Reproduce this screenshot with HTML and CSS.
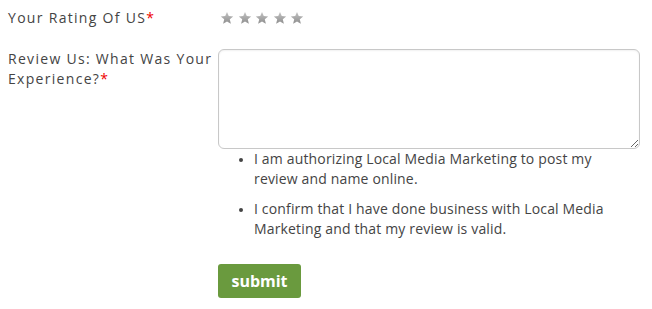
FILE: index.html
```html
<!DOCTYPE html>
<html>
<head>
<meta charset="utf-8">
<link rel="stylesheet" href="styles.css">
</head>
<body>
<form class="review-form">
  <div class="row rating-row">
    <label class="label required">Your Rating Of US</label>
    <div class="field">
      <div class="stars">
        <svg class="star" viewBox="0 0 24 24"><defs><linearGradient id="sg" x1="0" y1="0" x2="0" y2="1"><stop offset="0" stop-color="#c4c4c4"/><stop offset="1" stop-color="#8e8e8e"/></linearGradient></defs><path d="M12 1.5l3 7.2 7.6.6-5.8 5 1.8 7.6L12 17.8l-6.6 4.1 1.8-7.6-5.8-5 7.6-.6z"/></svg>
        <svg class="star" viewBox="0 0 24 24"><path d="M12 1.5l3 7.2 7.6.6-5.8 5 1.8 7.6L12 17.8l-6.6 4.1 1.8-7.6-5.8-5 7.6-.6z"/></svg>
        <svg class="star" viewBox="0 0 24 24"><path d="M12 1.5l3 7.2 7.6.6-5.8 5 1.8 7.6L12 17.8l-6.6 4.1 1.8-7.6-5.8-5 7.6-.6z"/></svg>
        <svg class="star" viewBox="0 0 24 24"><path d="M12 1.5l3 7.2 7.6.6-5.8 5 1.8 7.6L12 17.8l-6.6 4.1 1.8-7.6-5.8-5 7.6-.6z"/></svg>
        <svg class="star" viewBox="0 0 24 24"><path d="M12 1.5l3 7.2 7.6.6-5.8 5 1.8 7.6L12 17.8l-6.6 4.1 1.8-7.6-5.8-5 7.6-.6z"/></svg>
      </div>
    </div>
  </div>
  <div class="row review-row">
    <label class="label required">Review Us: What Was Your Experience?</label>
    <div class="field">
      <textarea class="textarea"></textarea>
      <ul class="terms">
        <li>I am authorizing Local Media Marketing to post my review and name online.</li>
        <li>I confirm that I have done business with Local Media Marketing and that my review is valid.</li>
      </ul>
      <button type="button" class="submit">submit</button>
    </div>
  </div>
</form>
</body>
</html>
```
FILE: styles.css
```css
html, body {
  margin: 0;
  padding: 0;
  background: #fff;
}
body {
  padding: 8px;
  font-family: "Open Sans", "Liberation Sans", sans-serif;
  font-size: 14px;
  line-height: 20px;
  color: #444;
}
.review-form {
  display: flex;
  flex-direction: column;
}
.row {
  display: grid;
  grid-template-columns: 210px 422px;
}
.rating-row {
  height: 41px;
}
.label {
  letter-spacing: 1.3px;
  color: #444;
}
.required::after {
  content: "*";
  color: #e00;
  letter-spacing: 0;
}
.field {
  display: flex;
  flex-direction: column;
  align-items: flex-start;
}
.stars {
  display: flex;
  gap: 3.5px;
  padding-left: 2px;
  padding-top: 3px;
}
.star {
  width: 14px;
  height: 14px;
  fill: url(#sg);
}
.textarea {
  box-sizing: border-box;
  width: 422px;
  height: 100px;
  border: 1px solid #c8c8c8;
  border-radius: 6px;
  box-shadow: inset 0 1px 2px rgba(0,0,0,0.06);
  margin: 0;
  padding: 4px;
  font-family: inherit;
  resize: both;
}
.terms {
  margin: 0;
  padding: 0 0 0 36px;
  width: 350px;
  list-style: disc;
  letter-spacing: 0.16px;
}
.terms li {
  margin-bottom: 10px;
}
.terms li::marker {
  font-size: 12px;
}
.submit {
  margin-top: 15px;
  width: 83px;
  height: 34px;
  border: none;
  border-radius: 3px;
  background: #6a9a3e;
  color: #fff;
  font-family: "Open Sans", "Liberation Sans", sans-serif;
  font-weight: 700;
  font-size: 16px;
  padding: 0;
}
```
